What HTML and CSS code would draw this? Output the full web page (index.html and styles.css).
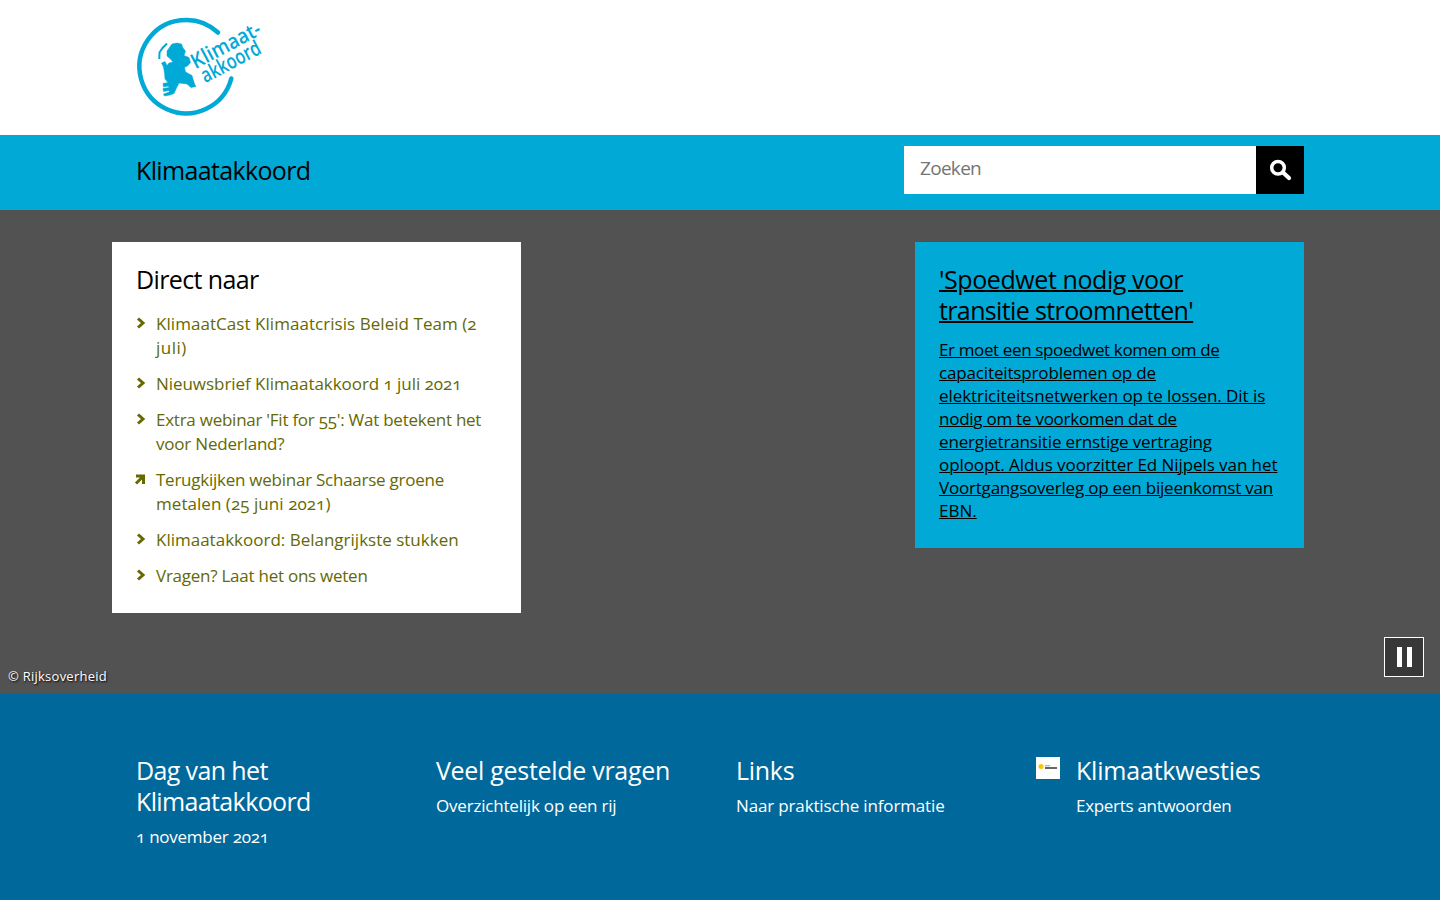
FILE: index.html
```
<!DOCTYPE html>
<html lang="nl">
<head>
<meta charset="utf-8">
<title>Klimaatakkoord</title>
<link rel="stylesheet" href="styles.css">
</head>
<body>
<header class="logo-bar">
  <svg class="logo" width="128" height="102" viewBox="0 0 128 102" role="img" aria-label="Klimaatakkoord">
    <path class="logo-ring" d="M82 16.500A46.700 46.700 0 1 0 95.300 62.500"/>
    <path class="logo-figure" d="M31 35L36 28L41 27L45.500 28L47 32L49.500 35L48 39.500L53 41.500L54.500 46.500L52 49.500L48.500 51.500L49.500 56L56 59.500L58.500 68L60 70.500L55 71.500L51 68L43 67L40.500 72L38 77.500L34 79L28.500 80L27.500 78L33.500 76L33 74.500L27.500 75.500L27 72.500L33 71.500L32.500 70L27.500 71L27 67.500L32 66.500L29 63L28.500 57L27.500 51L25.500 47L29 45.500L31 49.500L33 47L37 46L34.500 43L31 40Z"/>
    <path class="logo-flag" d="M31 27.500L26.500 32L23.500 36.500L23.300 43"/>
    <g class="logo-text" transform="rotate(-28 60 53)">
      <text x="59.500" y="53" textLength="76" lengthAdjust="spacingAndGlyphs">Klimaat-</text>
      <text x="61.500" y="70" textLength="65" lengthAdjust="spacingAndGlyphs">akkoord</text>
    </g>
  </svg>
</header>
<div class="title-bar">
  <div class="site-title">Klimaatakkoord</div>
  <form class="search">
    <input class="search-input" type="text" placeholder="Zoeken" aria-label="Zoeken">
    <button class="search-button" type="button" aria-label="Zoek"><svg width="24" height="24" viewBox="0 0 24 24"><circle cx="10" cy="9.700" r="6.300"/><path class="handle" d="M15 14.500l6 5.500"/></svg></button>
  </form>
</div>
<main class="hero">
  <section class="card direct">
    <h2 class="t60">Direct naar</h2>
    <ul class="links">
      <li><svg class="arrow" viewBox="0 0 10 12"><path d="M2 1.500L7 6L2 10.500"/></svg><a><span class="w05">KlimaatCast Klimaatcrisis Beleid Team (2</span><span class="w50">juli)</span></a></li>
      <li><svg class="arrow" viewBox="0 0 10 12"><path d="M2 1.500L7 6L2 10.500"/></svg><a><span class="t05">Nieuwsbrief Klimaatakkoord 1 juli 2021</span></a></li>
      <li><svg class="arrow" viewBox="0 0 10 12"><path d="M2 1.500L7 6L2 10.500"/></svg><a><span class="t25">Extra webinar 'Fit for 55': Wat betekent het</span><span class="t20">voor Nederland?</span></a></li>
      <li><svg class="arrow" viewBox="0 0 10 12"><path d="M0 3H7.500V11M7 3.500L0 10.500"/></svg><a><span class="t25">Terugkijken webinar Schaarse groene</span><span class="w05">metalen (25 juni 2021)</span></a></li>
      <li><svg class="arrow" viewBox="0 0 10 12"><path d="M2 1.500L7 6L2 10.500"/></svg><a><span>Klimaatakkoord: Belangrijkste stukken</span></a></li>
      <li><svg class="arrow" viewBox="0 0 10 12"><path d="M2 1.500L7 6L2 10.500"/></svg><a><span class="t25">Vragen? Laat het ons weten</span></a></li>
    </ul>
  </section>
  <section class="card news">
    <h2><span class="t40">'Spoedwet nodig voor</span><br><span class="t60">transitie stroomnetten'</span></h2>
    <p><span class="t35">Er moet een spoedwet komen om de</span><br><span class="t15">capaciteitsproblemen op de</span><br><span class="t07">elektriciteitsnetwerken op te lossen. Dit is</span><br><span class="t25">nodig om te voorkomen dat de</span><br><span class="t15">energietransitie ernstige vertraging</span><br><span class="t07">oploopt. Aldus voorzitter Ed Nijpels van het</span><br><span class="t20">Voortgangsoverleg op een bijeenkomst van</span><br>EBN.</p>
  </section>
  <div class="credit">© Rijksoverheid</div>
  <button class="pause" type="button" aria-label="Pauze"><i></i><i></i></button>
</main>
<section class="topics">
  <div class="topic"><h2 class="t60">Dag van het<br>Klimaatakkoord</h2><p class="t25">1 november 2021</p></div>
  <div class="topic"><h2 class="t30">Veel gestelde vragen</h2><p class="t20">Overzichtelijk op een rij</p></div>
  <div class="topic"><h2 class="t30">Links</h2><p class="t15">Naar praktische informatie</p></div>
  <div class="topic with-thumb">
    <svg class="thumb" width="24" height="22" viewBox="0 0 24 22"><path fill="#fff" d="M0 0h24v22H0z"/><circle cx="5" cy="9.500" r="2.500" fill="#f9c606"/><path d="M9 8.800h5" stroke="#999"/><path d="M9 11h12" stroke="#555" stroke-width="1.800"/></svg>
    <div><h2 class="t20">Klimaatkwesties</h2><p class="t30">Experts antwoorden</p></div>
  </div>
</section>
</body>
</html>
```
FILE: styles.css
```
* { box-sizing: border-box; margin: 0; padding: 0; }
body {
  width: 1440px;
  height: 900px;
  overflow: hidden;
  font-family: "Open Sans", "Noto Sans", sans-serif;
  font-variant-numeric: oldstyle-nums;
  font-size: 17px;
  color: #000;
  display: flex;
  flex-direction: column;
}
h2 { font-size: 25px; font-weight: 400; line-height: 31px; white-space: nowrap; }

/* Tracking steps, in hundredths of a pixel: t = tighter, w = wider */
.t05 { letter-spacing: -0.05px; }
.t07 { letter-spacing: -0.07px; }
.t15 { letter-spacing: -0.15px; }
.t20 { letter-spacing: -0.2px; }
.t25 { letter-spacing: -0.25px; }
.t30 { letter-spacing: -0.3px; }
.t35 { letter-spacing: -0.37px; }
.t40 { letter-spacing: -0.42px; }
.t60 { letter-spacing: -0.63px; }
.w05 { letter-spacing: 0.05px; }
.w50 { letter-spacing: 0.5px; }

.logo-bar { height: 135px; padding: 16px 136px; background: #fff; }
.logo { display: block; overflow: visible; }
.logo-ring { fill: none; stroke: #00a9d6; stroke-width: 4.500; stroke-linecap: round; }
.logo-figure { fill: #00a9d6; stroke: #00a9d6; stroke-width: 0.500; stroke-linejoin: round; }
.logo-flag { fill: none; stroke: #00a9d6; stroke-width: 2; }
.logo-text { fill: #00a9d6; font-size: 21px; font-weight: 600; }
.title-bar {
  height: 75px;
  padding: 11px 136px 0;
  background: #00a9d6;
  display: flex;
  justify-content: space-between;
}
.site-title { font-size: 25px; line-height: 48px; letter-spacing: -0.65px; }
.search { display: flex; width: 400px; height: 48px; }
.search-input {
  width: 352px;
  padding: 0 16px 4px;
  border: 0;
  background: #fff;
  font-family: inherit;
  font-size: 19px;
  letter-spacing: -0.7px;
}
.search-input::placeholder { color: #757575; }
.search-button {
  width: 48px;
  border: 0;
  background: #000;
  display: flex;
  align-items: center;
  justify-content: center;
}
.search-button svg { fill: none; stroke: #fff; stroke-width: 3.500; stroke-linecap: round; }
.search-button .handle { stroke-width: 4.200; }
.hero {
  position: relative;
  height: 484px;
  padding: 32px 136px 0 112px;
  background: #525252;
  display: flex;
  justify-content: space-between;
  align-items: flex-start;
}
.card { padding: 22px 24px 0; }
.direct { width: 409px; height: 371px; background: #fff; color: #000; }
.links { list-style: none; margin-top: 17px; color: #656900; }
.links li {
  display: flex;
  align-items: flex-start;
  gap: 10px;
  line-height: 24px;
  margin-bottom: 12px;
  white-space: nowrap;
}
.links span { display: block; }
.arrow {
  width: 10px;
  height: 12px;
  margin-top: 5px;
  flex: none;
  fill: none;
  overflow: visible;
  stroke: #656900;
  stroke-width: 3;
}
.news { width: 389px; height: 306px; background: #00a9d6; }
.news h2 { text-decoration: underline; text-decoration-thickness: 2px; }
.news p { margin-top: 12px; line-height: 23px; white-space: nowrap; text-decoration: underline; text-decoration-thickness: 1px; }
.credit {
  position: absolute;
  left: 8px;
  bottom: 9px;
  font-size: 13px;
  line-height: 18px;
  letter-spacing: 0.25px;
  color: #fff;
  text-shadow: 1px 1px 2px #000;
}
.pause {
  position: absolute;
  right: 16px;
  bottom: 17px;
  width: 40px;
  height: 40px;
  border: 1px solid #fff;
  background: #383838;
  display: flex;
  align-items: center;
  justify-content: center;
  gap: 5px;
}
.pause i { width: 5px; height: 20px; background: #fff; }
.topics {
  flex: 1;
  padding: 61px 136px 0;
  background: #00689b;
  color: #fff;
  display: grid;
  grid-template-columns: repeat(4, 300px);
}
.topic p { margin-top: 8px; line-height: 24px; white-space: nowrap; }
.with-thumb { display: flex; gap: 16px; }
.thumb { margin-top: 2px; flex: none; }
```
